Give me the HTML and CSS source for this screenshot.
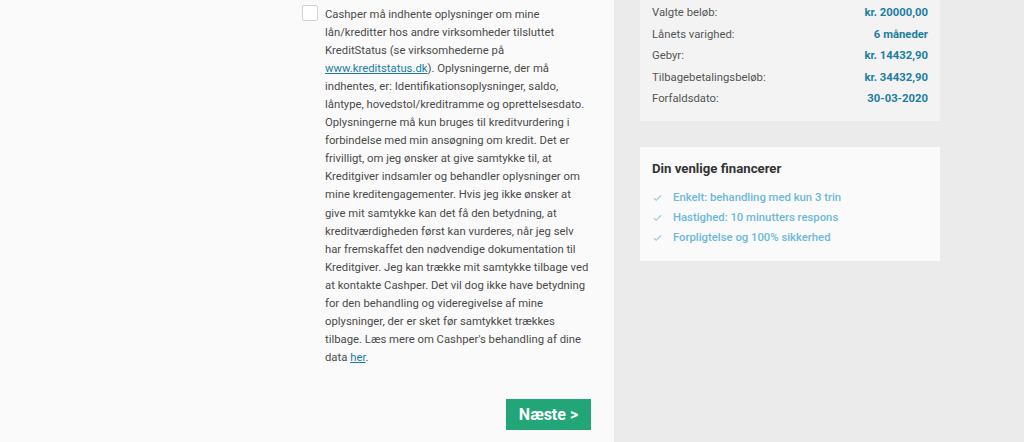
FILE: index.html
```html
<!DOCTYPE html>
<html lang="da">
<head>
    <meta charset="UTF-8">
    <title>Cashper - Ansøgning</title>
    <link rel="stylesheet" href="styles.css">
</head>
<body>
    <div class="page">
        <div class="main">
            <div class="consent">
                <span class="checkbox"></span>
                <p class="consent-text">
                    Cashper må indhente oplysninger om mine lån/kreditter hos andre virksomheder tilsluttet KreditStatus (se virksomhederne på <a href="#">www.kreditstatus.dk</a>). Oplysningerne, der må indhentes, er: Identifikationsoplysninger, saldo, låntype, hovedstol/kreditramme og oprettelsesdato. Oplysningerne må kun bruges til kreditvurdering i forbindelse med min ansøgning om kredit. Det er frivilligt, om jeg ønsker at give samtykke til, at Kreditgiver indsamler og behandler oplysninger om mine kreditengagementer. Hvis jeg ikke ønsker at give mit samtykke kan det få den betydning, at kreditværdigheden først kan vurderes, når jeg selv har fremskaffet den nødvendige dokumentation til Kreditgiver. Jeg kan trække mit samtykke tilbage ved at kontakte Cashper. Det vil dog ikke have betydning for den behandling og videregivelse af mine oplysninger, der er sket før samtykket trækkes tilbage. Læs mere om Cashper's behandling af dine data <a href="#">her</a>.
                </p>
            </div>
            <div class="actions">
                <button class="btn-next">Næste &gt;</button>
            </div>
        </div>

        <div class="aside">
            <div class="summary">
                <div class="row"><span class="label">Valgte beløb:</span><span class="value">kr. 20000,00</span></div>
                <div class="row"><span class="label">Lånets varighed:</span><span class="value">6 måneder</span></div>
                <div class="row"><span class="label">Gebyr:</span><span class="value">kr. 14432,90</span></div>
                <div class="row"><span class="label">Tilbagebetalingsbeløb:</span><span class="value">kr. 34432,90</span></div>
                <div class="row"><span class="label">Forfaldsdato:</span><span class="value">30-03-2020</span></div>
            </div>

            <div class="perks">
                <h3>Din venlige financerer</h3>
                <ul>
                    <li><svg class="tick" viewBox="0 0 10 8"><polyline points="1,4.2 3.6,6.6 9,1.2"/></svg>Enkelt: behandling med kun 3 trin</li>
                    <li><svg class="tick" viewBox="0 0 10 8"><polyline points="1,4.2 3.6,6.6 9,1.2"/></svg>Hastighed: 10 minutters respons</li>
                    <li><svg class="tick" viewBox="0 0 10 8"><polyline points="1,4.2 3.6,6.6 9,1.2"/></svg>Forpligtelse og 100% sikkerhed</li>
                </ul>
            </div>
        </div>
    </div>
</body>
</html>
```

FILE: styles.css
```css
* {
    margin: 0;
    padding: 0;
    box-sizing: border-box;
}

body {
    font-family: 'Roboto', 'Liberation Sans', sans-serif;
    font-size: 11.3px;
    color: #4a4a4a;
    background: #ebebeb;
}

.page {
    display: flex;
    min-height: 442px;
}

.main {
    flex: none;
    width: 614px;
    background: #fafafa;
    padding: 0 0 0 302px;
}

.consent {
    display: flex;
    gap: 7px;
}

.checkbox {
    flex: none;
    width: 16px;
    height: 16px;
    margin-top: 5px;
    border: 1px solid #d2d2d2;
    border-radius: 2px;
    background: #fff;
}

.consent-text {
    flex: none;
    width: 266px;
    padding-top: 6px;
    line-height: 18.05px;
}

.consent-text a {
    color: #1b7aa0;
}

.actions {
    display: flex;
    justify-content: flex-end;
    width: 289px;
    margin-top: 32px;
}

.btn-next {
    width: 85px;
    height: 31px;
    border: none;
    background: #22a677;
    color: #fff;
    font-family: inherit;
    font-size: 16px;
    font-weight: bold;
}

.aside {
    flex: 1;
    padding-left: 26px;
}

.summary {
    width: 300px;
    background: #f3f3f3;
    padding: 2px 12px 11px;
}

.row {
    display: flex;
    justify-content: space-between;
    height: 21.5px;
    align-items: center;
}

.label {
    color: #555;
}

.value {
    color: #1c7ea0;
    font-weight: bold;
}

.perks {
    width: 300px;
    margin-top: 26px;
    background: #fafafa;
    padding: 14px 12px 13px;
}

.perks h3 {
    font-size: 13.2px;
    color: #333;
    margin-bottom: 12px;
}

.perks li {
    list-style: none;
    display: flex;
    align-items: center;
    height: 20px;
    color: #6cb8da;
    font-weight: 500;
}

.tick {
    width: 9px;
    height: 8px;
    margin: 0 11px 0 1px;
    fill: none;
    stroke: #8cc7e0;
    stroke-width: 1.2;
}
```
